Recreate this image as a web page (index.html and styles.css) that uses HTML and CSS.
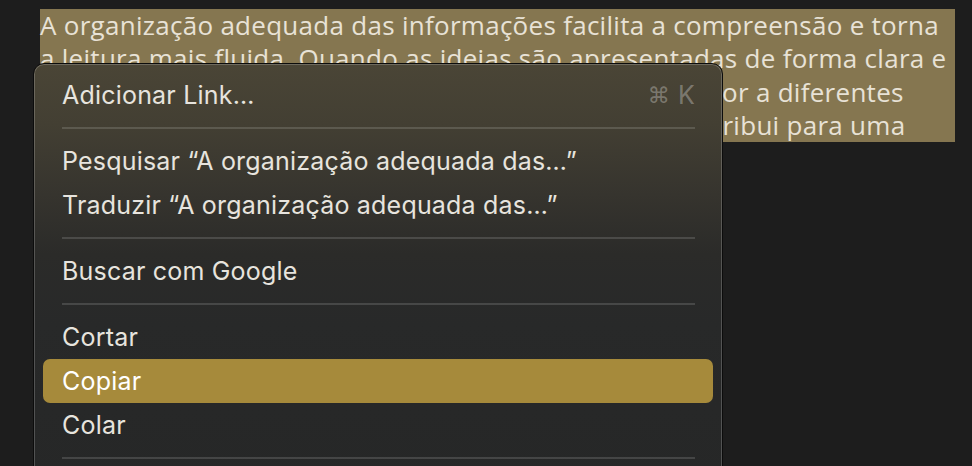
FILE: index.html
```html
<!DOCTYPE html>
<html lang="pt-BR">
<head>
<meta charset="utf-8">
<title>Menu de contexto</title>
<link rel="stylesheet" href="styles.css">
</head>
<body>
<main class="page">
  <p class="doc">A organização adequada das informações facilita a compreensão e torna<br>a leitura mais fluida. Quando as ideias são apresentadas de forma clara e<br>objetiva, o conteúdo ganha coerência e se adapta melhor a diferentes<br>públicos. Além disso, a boa estrutura do conteúdo contribui para uma</p>
</main>
<div class="menu" role="menu">
  <div class="item"><span class="label">Adicionar Link…</span><span class="shortcut"><span class="cmd">⌘</span> K</span></div>
  <div class="sep"></div>
  <div class="item"><span class="label">Pesquisar “A organização adequada das…”</span></div>
  <div class="item"><span class="label">Traduzir “A organização adequada das…”</span></div>
  <div class="sep"></div>
  <div class="item"><span class="label">Buscar com Google</span></div>
  <div class="sep"></div>
  <div class="item"><span class="label">Cortar</span></div>
  <div class="item active"><span class="label">Copiar</span></div>
  <div class="item"><span class="label">Colar</span></div>
  <div class="sep"></div>
</div>
</body>
</html>
```
FILE: styles.css
```css
html, body {
  margin: 0;
  padding: 0;
  background: #1d1d1d;
  height: 100%;
  overflow: hidden;
}

.page {
  padding: 9px 0 0 40px;
}

.doc {
  margin: 0;
  width: 915px;
  background: #857650;
  color: #e8e2d6;
  font-family: "Open Sans", "Noto Sans", sans-serif;
  font-size: 26px;
  letter-spacing: 0.28px;
  line-height: 33.25px;
  white-space: nowrap;
}

.menu {
  position: absolute;
  left: 33px;
  top: 63px;
  width: 690px;
  height: 430px;
  box-sizing: border-box;
  border: 1px solid #0c0c0c;
  border-radius: 11px;
  box-shadow: inset 0 0 0 1px rgba(255, 255, 255, 0.2);
  background: linear-gradient(180deg, #4a4536 0px, #433f33 60px, #36342e 130px, #2b2b29 190px, #282929 260px, #262727 100%);
  padding: 9px 9px;
  display: flex;
  flex-direction: column;
  font-family: "Inter", "Roboto", sans-serif;
  font-size: 25px;
  letter-spacing: 0.2px;
  color: #e7e4de;
}

.item {
  height: 44px;
  flex: 0 0 44px;
  display: flex;
  align-items: center;
  justify-content: space-between;
  padding: 0 18px 0 19px;
  border-radius: 7px;
}

.item.active {
  background: #a68a3b;
  color: #ffffff;
}

.shortcut {
  color: rgba(255, 255, 255, 0.3);
  display: flex;
  align-items: center;
  gap: 8px;
}

.cmd {
  font-family: "DejaVu Sans", sans-serif;
  font-size: 22px;
}

.sep {
  flex: 0 0 22px;
  height: 22px;
  display: flex;
  align-items: center;
  margin: 0 18px 0 19px;
}

.sep::before {
  content: "";
  display: block;
  width: 100%;
  height: 2px;
  background: rgba(255, 255, 255, 0.14);
}
```
